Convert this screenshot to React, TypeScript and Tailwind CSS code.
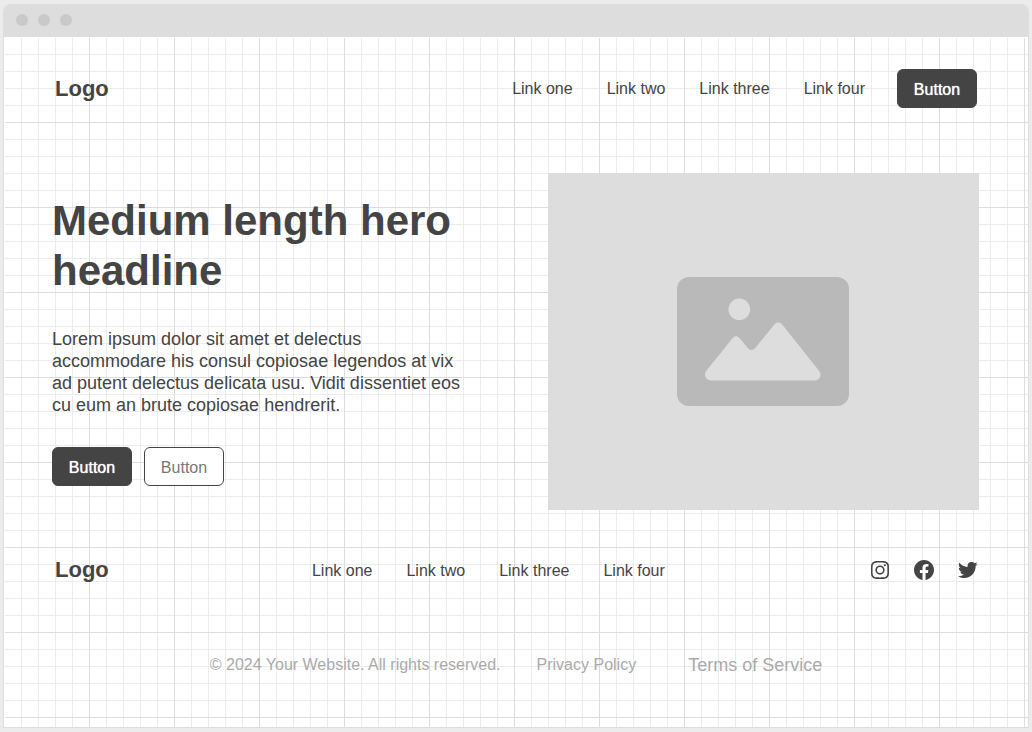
import { BiLogoFacebookCircle, BiLogoInstagram, BiLogoTwitter } from "react-icons/bi";

const links = ["Link one", "Link two", "Link three", "Link four"];

const socials = [
  { label: "Instagram", Icon: BiLogoInstagram },
  { label: "Facebook", Icon: BiLogoFacebookCircle },
  { label: "Twitter", Icon: BiLogoTwitter },
];

function Logo() {
  return (
    <a href="#" className="text-[22px] leading-8 font-bold">
      Logo
    </a>
  );
}

function Links() {
  return (
    <ul className="flex items-center gap-[34px]">
      {links.map((label) => (
        <li key={label}>
          <a href="#">{label}</a>
        </li>
      ))}
    </ul>
  );
}

function Button({ outline = false }: { outline?: boolean }) {
  return (
    <button
      type="button"
      className={
        outline
          ? "h-[39px] w-20 rounded-md border border-[#444] bg-white pt-0.5 text-[#777]"
          : "h-[39px] w-20 rounded-md border border-[#444] bg-[#444] pt-0.5 text-white [text-shadow:0_0_1px_#fff]"
      }
    >
      Button
    </button>
  );
}

function ImagePlaceholder() {
  return (
    <div className="flex aspect-[432/337] items-center justify-center bg-[#ddd]">
      <svg viewBox="0 0 172 129" className="w-[172px]" role="img" aria-label="Image placeholder">
        <rect width="172" height="129" rx="12" fill="#b9b9b9" />
        <circle cx="62.3" cy="32.3" r="10.8" fill="#ddd" />
        <path
          d="M34 103.500h103.500c5 0 7.700-5.500 4.700-9.500L105 47.300c-2-2.500-5.500-2.500-7.500 0L78 71.300c-1.900 2.300-5.100 2.300-7 0L62.500 61c-1.900-2.200-4.900-2.200-6.800 0L29.500 93.500c-3.500 4.300-.5 10 4.500 10z"
          fill="#ddd"
        />
      </svg>
    </div>
  );
}

export default function App() {
  return (
    <div className="min-h-screen bg-[#ececec] px-[3px] pt-1 pb-1 font-['Liberation_Sans',Arial,sans-serif] text-base text-[#444]">
      <div className="rounded-t-md border border-t-0 border-[#ddd] bg-white">
        <div className="flex h-[33px] items-center gap-2.5 rounded-t-md bg-[#ddd] px-3 pb-px">
          <span className="size-3 rounded-full bg-[#c9c9c9]" />
          <span className="size-3 rounded-full bg-[#c9c9c9]" />
          <span className="size-3 rounded-full bg-[#c9c9c9]" />
        </div>
        <div className="pt-px pl-px">
          <div className="bg-[linear-gradient(to_right,transparent_84px,#ddd_84px),linear-gradient(to_bottom,transparent_84px,#ddd_84px),linear-gradient(to_right,transparent_16px,#ececec_16px),linear-gradient(to_bottom,transparent_16px,#ececec_16px)] bg-[size:85px_85px,85px_85px,17px_17px,17px_17px] pr-12 pb-12 pl-[47px]">
            <header className="flex items-center justify-between pt-[31px] pr-[3px] pl-[3px]">
              <Logo />
              <nav aria-label="Main" className="flex items-center gap-8">
                <Links />
                <Button />
              </nav>
            </header>

            <main className="grid grid-cols-2 items-center gap-16 pt-[65px] pr-px">
              <section>
                <h1 className="text-[42px] leading-[50px] font-bold">Medium length hero headline</h1>
                <p className="mt-8 pr-2 text-lg leading-[22px]">
                  Lorem ipsum dolor sit amet et delectus accommodare his consul copiosae legendos at vix ad
                  putent delectus delicata usu. Vidit dissentiet eos cu eum an brute copiosae hendrerit.
                </p>
                <div className="mt-[31px] flex gap-3">
                  <Button />
                  <Button outline />
                </div>
              </section>
              <ImagePlaceholder />
            </main>

            <footer className="pt-11">
              <div className="flex items-center justify-between pl-[3px]">
                <Logo />
                <nav aria-label="Footer" className="pt-0.5">
                  <Links />
                </nav>
                <div className="flex gap-5">
                  {socials.map(({ label, Icon }) => (
                    <a key={label} href="#" aria-label={label}>
                      <Icon className="size-6" />
                    </a>
                  ))}
                </div>
              </div>
              <div className="mt-[65px] flex items-center justify-center text-[#aaa]">
                <p>© 2024 Your Website. All rights reserved.</p>
                <a href="#" className="ml-9">
                  Privacy Policy
                </a>
                <a href="#" className="ml-[52px] text-lg">
                  Terms of Service
                </a>
              </div>
            </footer>
          </div>
        </div>
      </div>
    </div>
  );
}
